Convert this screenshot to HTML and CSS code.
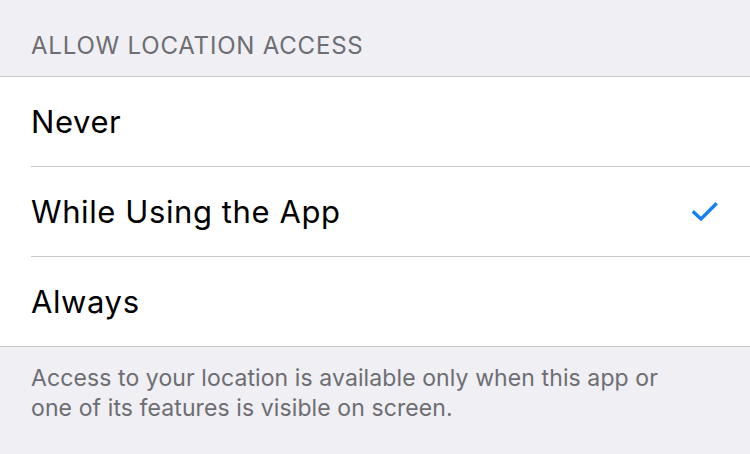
FILE: index.html
```html
<!DOCTYPE html>
<html lang="en">
<head>
    <meta charset="UTF-8">
    <title>Location</title>
    <link rel="stylesheet" href="styles.css">
</head>
<body>
    <div class="section-header">ALLOW LOCATION ACCESS</div>

    <div class="options">
        <div class="option">
            <span class="option-label">Never</span>
        </div>
        <div class="option">
            <span class="option-label">While Using the App</span>
            <svg class="check" width="26" height="21" viewBox="0 0 26 21">
                <path d="M2 11.5 L9 18 L23.5 3.5" fill="none" stroke="#147efb" stroke-width="3.4" stroke-linecap="square" stroke-linejoin="miter"/>
            </svg>
        </div>
        <div class="option">
            <span class="option-label">Always</span>
        </div>
    </div>

    <div class="section-footer">
        Access to your location is available only when this app or<br>
        one of its features is visible on screen.
    </div>
</body>
</html>
```

FILE: styles.css
```css
body {
    margin: 0;
    background-color: #efeff4;
    font-family: Inter, 'Liberation Sans', Arial, sans-serif;
}
.section-header {
    height: 76px;
    box-sizing: border-box;
    padding: 32px 0 0 31px;
    font-size: 24px;
    line-height: 28px;
    letter-spacing: 0.8px;
    color: #6d6d72;
}
.options {
    background: white;
    border-top: 1px solid #c8c7cc;
    border-bottom: 1px solid #c8c7cc;
    padding-left: 31px;
}
.option {
    height: 89px;
    display: flex;
    align-items: center;
    justify-content: space-between;
    padding-right: 32px;
    border-bottom: 1px solid #c8c7cc;
}
.option:last-child {
    border-bottom: none;
}
.option-label {
    font-size: 31px;
    letter-spacing: 0.6px;
    color: #000;
}
.section-footer {
    padding: 16px 31px 0 31px;
    font-size: 23px;
    line-height: 30px;
    letter-spacing: 0.1px;
    color: #6d6d72;
}
```
